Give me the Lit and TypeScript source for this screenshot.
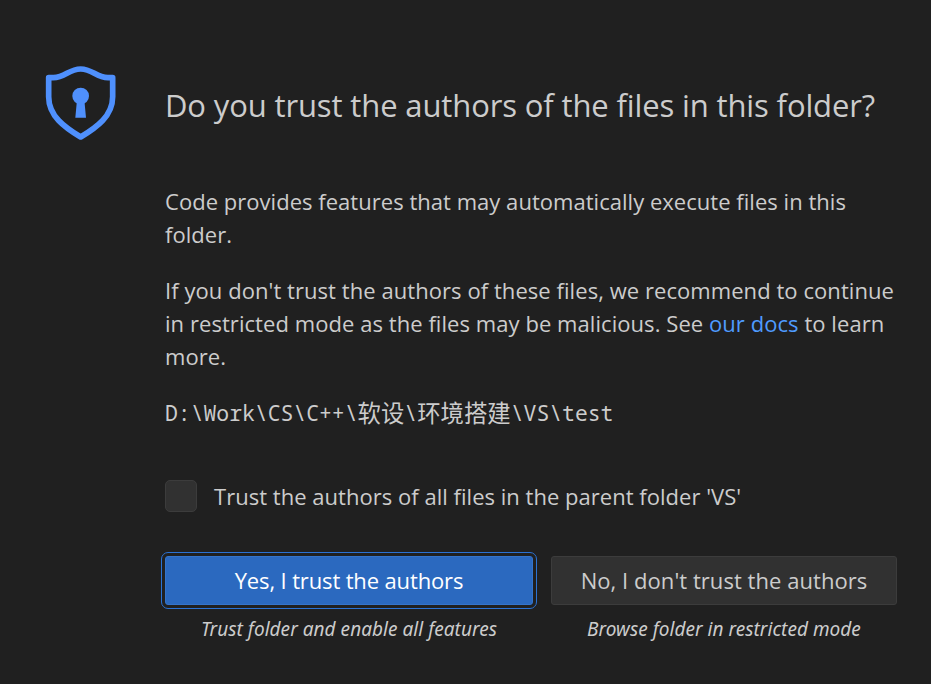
import { LitElement, html, css } from "lit";
import { customElement } from "lit/decorators.js";

@customElement("app-root")
class AppRoot extends LitElement {
  static styles = css`
    :host {
      display: block;
      box-sizing: border-box;
      width: 931px;
      height: 684px;
      overflow: hidden;
      background: #202020;
      color: #cccccc;
      font: 22px/33px "Open Sans", "Noto Sans", sans-serif;
      padding-top: 50px;
    }
    .header {
      display: flex;
      height: 100px;
      padding-left: 30px;
    }
    .shield {
      width: 100px;
      height: 100px;
      flex: none;
      margin-right: 35px;
    }
    h1 {
      margin: 33px 0 0;
      font-size: 31px;
      line-height: 44px;
      font-weight: 400;
      letter-spacing: -0.13px;
      white-space: nowrap;
    }
    .body {
      margin: 35px 34px 0 165px;
    }
    p {
      margin: 0 0 23px;
      white-space: nowrap;
      letter-spacing: 0.06px;
    }
    .intro {
      letter-spacing: 0.03px;
    }
    a {
      color: #4f9bff;
      text-decoration: none;
    }
    .path {
      font-family: "Noto Sans Mono", "DejaVu Sans Mono", "Noto Sans CJK SC", monospace;
      font-size: 21.4px;
      font-weight: 450;
      height: 33px;
      margin-bottom: 51px;
      letter-spacing: 0;
    }
    .cjk {
      font-family: "Noto Sans CJK SC", sans-serif;
      font-size: 23.4px;
      font-weight: 400;
      line-height: 1;
      vertical-align: -1px;
    }
    .check {
      display: flex;
      gap: 17px;
      height: 33px;
      margin-bottom: 43px;
      letter-spacing: 0.025px;
    }
    .box {
      box-sizing: border-box;
      width: 32px;
      height: 32px;
      background: #313131;
      border: 1px solid #3c3c3c;
      border-radius: 5px;
    }
    .actions {
      display: grid;
      grid-template-columns: 368px 346px;
      column-gap: 18px;
      text-align: center;
    }
    .btn {
      box-sizing: border-box;
      height: 49px;
      line-height: 47px;
      border: 1px solid #3c3c3c;
      border-radius: 3px;
      background: #313131;
      letter-spacing: 0.05px;
    }
    .primary {
      background: #2b69bf;
      border-color: #3574ca;
      color: #fff;
      outline: 1px solid #2b72d3;
      outline-offset: 3px;
      letter-spacing: -0.14px;
    }
    .note {
      margin-top: 10px;
      font-family: "Noto Sans", sans-serif;
      font-size: 19px;
      line-height: 28px;
      font-style: italic;
      letter-spacing: 0.04px;
    }
  `;

  render() {
    return html`
      <div class="header">
        <svg class="shield" viewBox="0 0 300 300" fill="none">
          <path
            d="M56 83H70C106 83 116 57 152 57C188 57 198 83 234 83H248V140C248 198 200 232 152 261C104 232 56 198 56 140Z"
            stroke="#4f90fd" stroke-width="17" stroke-linejoin="round" />
          <circle cx="152" cy="138" r="25" fill="#4f90fd" />
          <path d="M141 150H163L168 203H136Z" fill="#4f90fd" />
        </svg>
        <h1>Do you trust the authors of the files in this folder?</h1>
      </div>
      <div class="body">
        <p class="intro">Code provides features that may automatically execute files in this<br />folder.</p>
        <p>If you don't trust the authors of these files, we recommend to continue<br />in restricted mode as the files may be malicious. See <a>our docs</a> to learn<br />more.</p>
        <p class="path">D:\\Work\\CS\\C++\\<span class="cjk">软设</span>\\<span class="cjk">环境搭建</span>\\VS\\test</p>
        <div class="check"><span class="box"></span><span>Trust the authors of all files in the parent folder 'VS'</span></div>
        <div class="actions">
          <div><div class="btn primary">Yes, I trust the authors</div><div class="note">Trust folder and enable all features</div></div>
          <div><div class="btn">No, I don't trust the authors</div><div class="note">Browse folder in restricted mode</div></div>
        </div>
      </div>
    `;
  }
}
